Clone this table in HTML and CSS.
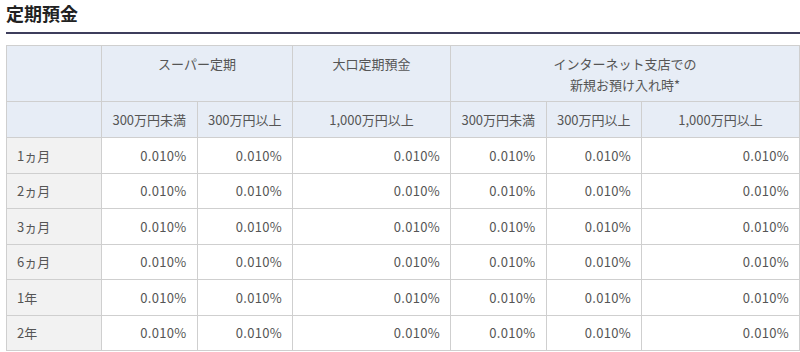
FILE: index.html
```html
<!DOCTYPE html>
<html lang="ja">
<head>
<meta charset="utf-8">
<link rel="stylesheet" href="styles.css">
</head>
<body>
<div class="wrap">
  <h2 class="title">定期預金</h2>
  <table class="rates">
    <colgroup>
      <col class="c-label"><col class="c-n"><col class="c-n"><col class="c-w"><col class="c-n"><col class="c-n"><col class="c-w">
    </colgroup>
    <thead>
      <tr class="h1">
        <th></th>
        <th colspan="2">スーパー定期</th>
        <th>大口定期預金</th>
        <th colspan="3">インターネット支店での<br>新規お預け入れ時*</th>
      </tr>
      <tr class="h2">
        <th></th>
        <th>300万円未満</th>
        <th>300万円以上</th>
        <th>1,000万円以上</th>
        <th>300万円未満</th>
        <th>300万円以上</th>
        <th>1,000万円以上</th>
      </tr>
    </thead>
    <tbody>
      <tr><th>1ヵ月</th><td>0.010%</td><td>0.010%</td><td>0.010%</td><td>0.010%</td><td>0.010%</td><td>0.010%</td></tr>
      <tr><th>2ヵ月</th><td>0.010%</td><td>0.010%</td><td>0.010%</td><td>0.010%</td><td>0.010%</td><td>0.010%</td></tr>
      <tr><th>3ヵ月</th><td>0.010%</td><td>0.010%</td><td>0.010%</td><td>0.010%</td><td>0.010%</td><td>0.010%</td></tr>
      <tr><th>6ヵ月</th><td>0.010%</td><td>0.010%</td><td>0.010%</td><td>0.010%</td><td>0.010%</td><td>0.010%</td></tr>
      <tr><th>1年</th><td>0.010%</td><td>0.010%</td><td>0.010%</td><td>0.010%</td><td>0.010%</td><td>0.010%</td></tr>
      <tr><th>2年</th><td>0.010%</td><td>0.010%</td><td>0.010%</td><td>0.010%</td><td>0.010%</td><td>0.010%</td></tr>
    </tbody>
  </table>
</div>
</body>
</html>
```

FILE: styles.css
```css
html, body {
  margin: 0;
  padding: 0;
  background: #fff;
}
body {
  font-family: "Noto Sans CJK JP", "Noto Sans", sans-serif;
  color: #555;
}
.wrap {
  margin-left: 6px;
  width: 794px;
}
.title {
  margin: 0;
  font-size: 18px;
  font-weight: bold;
  line-height: 26px;
  padding-bottom: 6px;
  border-bottom: 2px solid #3e3e5c;
  color: #222;
}
.rates {
  margin-top: 11px;
  border-collapse: collapse;
  table-layout: fixed;
  width: 792px;
  font-size: 13px;
  line-height: 21px;
}
.c-label { width: 95px; }
.c-n { width: 95.5px; }
.c-w { width: 158px; }
.rates th, .rates td {
  border: 1px solid #cfcfcf;
  font-weight: normal;
  padding: 0 10px;
}
.rates thead th {
  background: #e7edf6;
  text-align: center;
}
.h1 { height: 56px; }
.h1 th { vertical-align: top; padding-top: 7px; }
.h2 { height: 36px; }
.rates tbody tr { height: 35.5px; }
.rates tbody th {
  background: #f2f2f2;
  text-align: left;
}
.rates tbody td {
  text-align: right;
  background: #fff;
  letter-spacing: 0.3px;
}
```
